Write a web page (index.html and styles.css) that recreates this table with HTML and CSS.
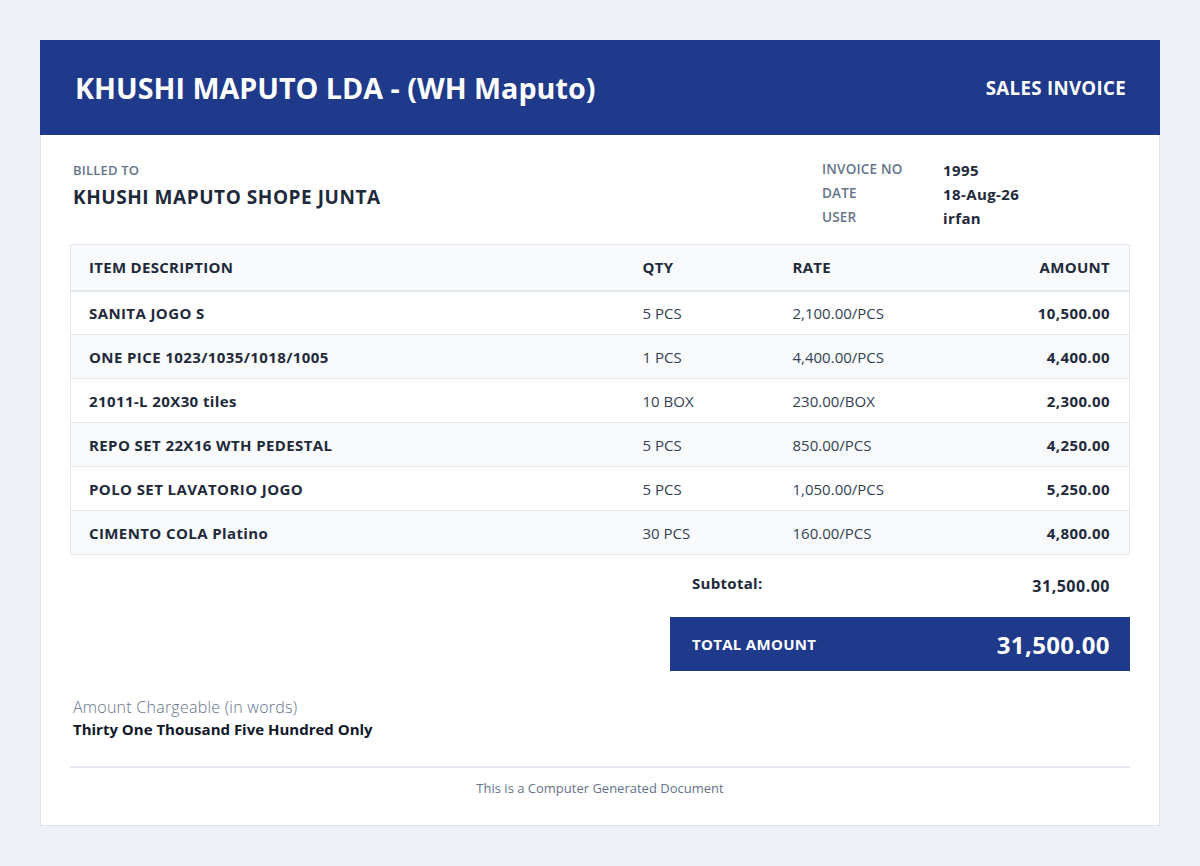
FILE: index.html
```html
<!DOCTYPE html>
<html>
<head>
<meta charset="utf-8">
<link rel="stylesheet" href="styles.css">
</head>
<body>
<div class="invoice">
  <header class="inv-head">
    <h1 class="company">KHUSHI MAPUTO LDA - (WH Maputo)</h1>
    <div class="doc-type">SALES INVOICE</div>
  </header>
  <div class="inv-body">
    <div class="info">
      <div class="billed">
        <div class="label">BILLED TO</div>
        <div class="customer">KHUSHI MAPUTO SHOPE JUNTA</div>
      </div>
      <div class="meta">
        <div class="label">INVOICE NO</div><div class="val">1995</div>
        <div class="label">DATE</div><div class="val">18-Aug-26</div>
        <div class="label">USER</div><div class="val">irfan</div>
      </div>
    </div>
    <table class="items">
      <colgroup>
        <col class="c-desc"><col class="c-qty"><col class="c-rate"><col class="c-amt">
      </colgroup>
      <thead>
        <tr><th>ITEM DESCRIPTION</th><th>QTY</th><th>RATE</th><th class="r">AMOUNT</th></tr>
      </thead>
      <tbody>
        <tr><td class="d">SANITA JOGO S</td><td>5 PCS</td><td>2,100.00/PCS</td><td class="r b">10,500.00</td></tr>
        <tr><td class="d">ONE PICE 1023/1035/1018/1005</td><td>1 PCS</td><td>4,400.00/PCS</td><td class="r b">4,400.00</td></tr>
        <tr><td class="d">21011-L 20X30 tiles</td><td>10 BOX</td><td>230.00/BOX</td><td class="r b">2,300.00</td></tr>
        <tr><td class="d">REPO SET 22X16 WTH PEDESTAL</td><td>5 PCS</td><td>850.00/PCS</td><td class="r b">4,250.00</td></tr>
        <tr><td class="d">POLO SET LAVATORIO JOGO</td><td>5 PCS</td><td>1,050.00/PCS</td><td class="r b">5,250.00</td></tr>
        <tr><td class="d">CIMENTO COLA Platino</td><td>30 PCS</td><td>160.00/PCS</td><td class="r b">4,800.00</td></tr>
      </tbody>
    </table>
    <div class="totals">
      <div class="subtotal"><span class="s-label">Subtotal:</span><span class="s-val">31,500.00</span></div>
      <div class="grand"><span class="g-label">TOTAL AMOUNT</span><span class="g-val">31,500.00</span></div>
    </div>
    <div class="words">
      <div class="w-label">Amount Chargeable (in words)</div>
      <div class="w-val">Thirty One Thousand Five Hundred Only</div>
    </div>
    <footer class="foot">This is a Computer Generated Document</footer>
  </div>
</div>
</body>
</html>
```

FILE: styles.css
```css
* { box-sizing: border-box; }
html, body { margin: 0; padding: 0; }
body {
  background: #eef2f7;
  font-family: "Segoe UI", "Open Sans", "Noto Sans", sans-serif;
  color: #1e293b;
  padding: 40px;
}
.invoice {
  background: #fff;
  border: 1px solid #dde3ec;
  width: 1120px;
  height: 786px;
}
.inv-head {
  background: #1f3a8a;
  height: 95px;
  margin: -1px -1px 0 -1px;
  display: flex;
  align-items: center;
  justify-content: space-between;
  padding: 0 34px 0 35px;
  color: #fff;
}
.company {
  margin: 0;
  font-size: 28.7px;
  font-weight: 700;
  letter-spacing: 0;
}
.doc-type {
  font-size: 18.7px;
  font-weight: 700;
  letter-spacing: 0.3px;
  margin-top: -1px;
}
.inv-body {
  padding: 25px 29px 0 29px;
}
.info {
  display: flex;
  justify-content: space-between;
  height: 84px;
}
.billed .label {
  font-size: 13px;
  font-weight: 600;
  letter-spacing: 0.2px;
  color: #64748b;
  margin: 0 0 0 3px;
  line-height: 20px;
}
.customer {
  font-size: 19px;
  font-weight: 700;
  letter-spacing: 0.55px;
  color: #1e293b;
  margin: 4px 0 0 3px;
  line-height: 26px;
}
.meta {
  display: grid;
  grid-template-columns: 121px 187px;
  grid-auto-rows: 24px;
  align-items: center;
  margin-top: -3px;
}
.meta .label {
  font-size: 13.5px;
  font-weight: 600;
  letter-spacing: 0.2px;
  color: #64748b;
}
.meta .val {
  font-size: 15px;
  font-weight: 700;
  letter-spacing: 0.4px;
  color: #1e293b;
  padding-top: 2px;
}
.items {
  width: 1060px;
  border-collapse: collapse;
  border: 1px solid #e2e8f0;
  font-size: 15px;
}
.c-desc { width: 554px; }
.c-qty { width: 150px; }
.c-rate { width: 150px; }
.items th {
  background: #f8fafc;
  height: 46px;
  text-align: left;
  font-weight: 700;
  font-size: 15px;
  letter-spacing: 0.3px;
  color: #1e293b;
  padding: 0 18px;
  border-bottom: 2px solid #e2e8f0;
}
.items td {
  height: 44px;
  padding: 0 18px;
  border-bottom: 1px solid #e2e8f0;
  color: #334155;
  font-size: 15px;
}
.items tbody tr:nth-child(even) td { background: #f8fafc; }
.items td.d { font-weight: 700; color: #1e293b; letter-spacing: 0.4px; }
.items .r { text-align: right; padding-right: 19px; }
.items td.b { font-weight: 700; color: #1e293b; letter-spacing: 0.4px; }
.totals {
  width: 460px;
  margin: 0 0 0 auto;
}
.subtotal {
  display: flex;
  justify-content: space-between;
  padding: 20px 20px 0 22px;
  height: 62px;
  font-weight: 700;
  color: #1e293b;
}
.s-label { font-size: 15px; letter-spacing: 0.3px; margin-top: -2px; }
.s-val { font-size: 16px; letter-spacing: 0.5px; }
.grand {
  background: #1f3a8a;
  color: #fff;
  height: 54px;
  display: flex;
  justify-content: space-between;
  align-items: center;
  padding: 0 20px 0 22px;
}
.g-label { font-size: 15px; font-weight: 700; letter-spacing: 0.3px; }
.g-val { font-size: 24px; font-weight: 700; letter-spacing: 0.4px; }
.words {
  margin: 25px 0 0 3px;
  height: 70px;
}
.w-label {
  font-size: 16px;
  font-weight: 300;
  letter-spacing: 0.25px;
  color: #64748b;
  line-height: 22px;
}
.w-val {
  font-size: 15px;
  font-weight: 700;
  color: #0f172a;
  line-height: 22px;
}
.foot {
  border-top: 2px solid #e5e9f0;
  width: 1060px;
  text-align: center;
  font-size: 13px;
  color: #64748b;
  padding-top: 11px;
  line-height: 18px;
}
```
